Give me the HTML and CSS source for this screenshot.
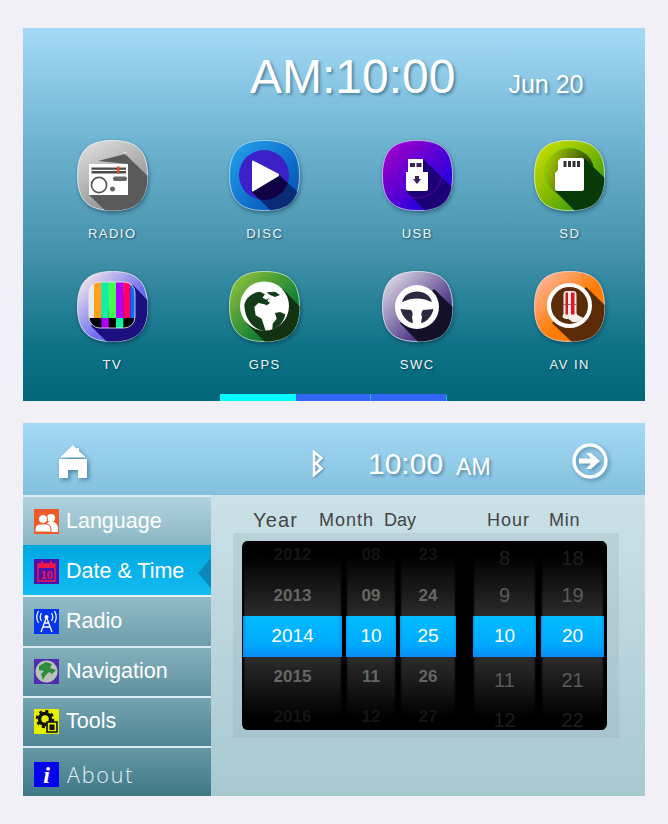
FILE: index.html
```html
<!DOCTYPE html>
<html>
  <head>
    <title>Car Head Unit</title>
    <link rel="stylesheet" href="styles.css">
  </head>
  <body>
    <svg class="defs" width="0" height="0">
      <defs>
        <path id="sq" d="M35.5 .5C60 .5 70.5 11 70.5 35.5C70.5 60 60 70.5 35.5 70.5C11 70.5 .5 60 .5 35.5C.5 11 11 .5 35.5 .5Z"/>
        <clipPath id="sqClip"><use href="#sq"/></clipPath>
        <clipPath id="discClip"><circle cx="35" cy="35" r="25"/></clipPath>
        <linearGradient id="gRadio" x1="0" y1="0" x2=".6" y2="1"><stop offset="0" stop-color="#e4e4e4"/><stop offset="1" stop-color="#8a8a8a"/></linearGradient>
        <linearGradient id="gDisc" x1="0" y1="0" x2="1" y2="1"><stop offset="0" stop-color="#25a5ee"/><stop offset="1" stop-color="#0048b0"/></linearGradient>
        <linearGradient id="gUsb" x1="0" y1="0" x2="1" y2="1"><stop offset="0" stop-color="#b000c8"/><stop offset=".7" stop-color="#3000dc"/></linearGradient>
        <linearGradient id="gSd" x1="0" y1="0" x2="1" y2="1"><stop offset="0" stop-color="#d4e400"/><stop offset=".5" stop-color="#80b800"/><stop offset="1" stop-color="#0c8c18"/></linearGradient>
        <linearGradient id="gSdIn" x1="0" y1=".3" x2="1" y2=".7"><stop offset="0" stop-color="#a8cc00"/><stop offset=".8" stop-color="#2a4400"/></linearGradient>
        <linearGradient id="gTv" x1="0" y1="0" x2="1" y2="1"><stop offset=".1" stop-color="#ece2ea"/><stop offset=".6" stop-color="#6c6cf0"/></linearGradient>
        <linearGradient id="gGps" x1="0" y1="0" x2="1" y2="1"><stop offset="0" stop-color="#9cc83c"/><stop offset=".7" stop-color="#0c7c34"/></linearGradient>
        <linearGradient id="gSwc" x1="0" y1="0" x2="1" y2="1"><stop offset=".05" stop-color="#e4e0ea"/><stop offset=".7" stop-color="#503888"/></linearGradient>
        <linearGradient id="gAv" x1="0" y1="0" x2="1" y2="1"><stop offset=".05" stop-color="#ffb8a8"/><stop offset=".55" stop-color="#ff7c00"/></linearGradient>
      </defs>
    </svg>

    <section class="screen home-screen">
      <div class="clock">
        <span class="clock-time">AM:10:00</span>
        <span class="clock-date">Jun 20</span>
      </div>

      <div class="apps">
        <div class="app">
          <svg class="app-icon" viewBox="0 0 71 71">
            <use href="#sq" fill="url(#gRadio)" stroke="#fff" stroke-width=".7"/>
            <g clip-path="url(#sqClip)"><polygon points="21,21 48,14 75,40 75,75 33,75 12,55 51,55 51,24" fill="#5a5a5a"/></g>
            <path d="M48 10.500V14.500M46 12.500H50" stroke="#ddd" stroke-width=".8"/>
            <rect x="12" y="24" width="39" height="31" fill="#fff"/>
            <rect x="14.500" y="27.500" width="34.500" height="6" fill="#4a4a4a"/>
            <rect x="14.500" y="29.800" width="34.500" height="1.200" fill="#fff"/>
            <rect x="40" y="26.500" width="2.400" height="7" fill="#f04810"/>
            <circle cx="22" cy="45" r="7.600" fill="none" stroke="#555" stroke-width="1.600"/>
            <rect x="36" y="36.500" width="14" height="4.500" rx="2" fill="#666"/>
            <circle cx="35.500" cy="49" r="2.500" fill="#666"/>
          </svg>
          <span class="app-name">RADIO</span>
        </div>
        <div class="app">
          <svg class="app-icon" viewBox="0 0 71 71">
            <use href="#sq" fill="url(#gDisc)" stroke="#cfeaff" stroke-width=".7"/>
            <g clip-path="url(#sqClip)">
              <circle cx="35" cy="35" r="25" fill="#3a20c6"/>
              <polygon points="50,35 75,58 75,75 46,75 23,52" fill="#0a2c74"/>
            </g>
            <polygon points="50,35 75,58 75,75 46,75 23,52" fill="#100044" clip-path="url(#discClip)"/>
            <path d="M24 20.500L49 33.500Q51 35 49 36.500L24 51.500Q23 52 23 50V22Q23 20 24 20.500Z" fill="#fff"/>
          </svg>
          <span class="app-name">DISC</span>
        </div>
        <div class="app">
          <svg class="app-icon" viewBox="0 0 71 71">
            <use href="#sq" fill="url(#gUsb)" stroke="#e8d0ff" stroke-width=".7"/>
            <g clip-path="url(#sqClip)"><polygon points="41,19 75,52 75,75 47,75 24,51" fill="#1c0078"/></g>
            <circle cx="35" cy="33" r="25" fill="none" stroke="#7000a8" stroke-width=".8"/>
            <path d="M26 19h15v13h5v17q0 2-2 2H26q-2 0-2-2V32h2Z" fill="#fff"/>
            <rect x="28" y="23" width="5" height="4" fill="#3a2060"/>
            <rect x="34.500" y="23" width="5" height="4" fill="#3a2060"/>
            <path d="M33 36h4v3h2l-4 5-4-5h2Z" fill="#3a2060"/>
          </svg>
          <span class="app-name">USB</span>
        </div>
        <div class="app">
          <svg class="app-icon" viewBox="0 0 71 71">
            <use href="#sq" fill="url(#gSd)" stroke="#f4ffd0" stroke-width=".7"/>
            <circle cx="36" cy="33" r="25" fill="url(#gSdIn)" stroke="#60d010" stroke-width=".8"/>
            <g clip-path="url(#sqClip)"><polygon points="50,18 75,42 75,58 55,75 45,75 21,51" fill="#0a3a08"/></g>
            <path d="M27 18h21q2 0 2 2v29q0 2-2 2H23q-2 0-2-2V33l3-3v-9Z" fill="#fff"/>
            <rect x="29.500" y="21" width="3" height="6" fill="#333"/>
            <rect x="34" y="21" width="3" height="6" fill="#333"/>
            <rect x="38.500" y="21" width="3" height="6" fill="#333"/>
            <rect x="43" y="21" width="3" height="6" fill="#333"/>
          </svg>
          <span class="app-name">SD</span>
        </div>
        <div class="app">
          <svg class="app-icon" viewBox="0 0 71 71">
            <defs><clipPath id="tvClip"><rect x="12" y="11" width="46" height="46" rx="11"/></clipPath></defs>
            <use href="#sq" fill="url(#gTv)" stroke="#fff" stroke-width=".7"/>
            <g clip-path="url(#sqClip)"><polygon points="56,14 75,34 75,75 34,75 14,55" fill="#1c1080"/></g>
            <g clip-path="url(#tvClip)">
              <rect x="12" y="11" width="5" height="36" fill="#e8e8e8"/>
              <rect x="17" y="11" width="7.400" height="36" fill="#ffa01e"/>
              <rect x="24.400" y="11" width="7.300" height="36" fill="#10f0a4"/>
              <rect x="31.700" y="11" width="7.300" height="36" fill="#40ff50"/>
              <rect x="39" y="11" width="7.300" height="36" fill="#b000ff"/>
              <rect x="46.300" y="11" width="7.300" height="36" fill="#ff0064"/>
              <rect x="53.600" y="11" width="4.400" height="36" fill="#0070ff"/>
              <rect x="12" y="47" width="46" height="10" fill="#000"/>
              <rect x="24.400" y="47" width="7.300" height="10" fill="#b000ff"/>
              <rect x="39" y="47" width="7.300" height="10" fill="#10f0a4"/>
            </g>
            <rect x="12" y="11" width="46" height="46" rx="11" fill="none" stroke="#eee" stroke-width=".8"/>
          </svg>
          <span class="app-name">TV</span>
        </div>
        <div class="app">
          <svg class="app-icon" viewBox="0 0 71 71">
            <use href="#sq" fill="url(#gGps)" stroke="#e0ffd0" stroke-width=".7"/>
            <g clip-path="url(#sqClip)"><polygon points="54,18 75,40 75,75 40,75 17,52" fill="#123212"/></g>
            <circle cx="35.500" cy="35" r="24.500" fill="#fff"/>
            <g transform="translate(-4,0) scale(.3333)" fill="#143c18">
              <path d="M58 102C62 78 85 64 105 62L120 70L112 80L125 86L135 78L120 100L100 96L88 108L92 133L110 143L115 158L122 180C85 176 60 148 58 102Z"/>
              <path d="M150 126L165 123L181 130C178 148 165 166 142 177L143 158L155 143Z"/>
              <path d="M105 93L125 103L135 96L128 90L115 93Z"/>
              <path d="M125 64L150 62L165 72L150 78L135 72Z"/>
            </g>
          </svg>
          <span class="app-name">GPS</span>
        </div>
        <div class="app">
          <svg class="app-icon" viewBox="0 0 71 71">
            <use href="#sq" fill="url(#gSwc)" stroke="#fff" stroke-width=".7"/>
            <g clip-path="url(#sqClip)"><polygon points="52,18 75,40 75,75 40,75 18,52" fill="#14102a"/></g>
            <circle cx="35" cy="36" r="22" fill="#fff"/>
            <path d="M20 31C22 24 28 20.500 35 20.500C42 20.500 48 24 50 31C44 28.500 40 27.500 35 27.500C30 27.500 26 28.500 20 31Z" fill="#2c2840"/>
            <path d="M18.500 38L29 39C31 41 31 44 30 46L31 52C25 51 20 45 18.500 38Z" fill="#2c2840"/>
            <path d="M51.500 38L41 39C39 41 39 44 40 46L39 52C45 51 50 45 51.500 38Z" fill="#2c2840"/>
          </svg>
          <span class="app-name">SWC</span>
        </div>
        <div class="app">
          <svg class="app-icon" viewBox="0 0 71 71">
            <use href="#sq" fill="url(#gAv)" stroke="#ffe8d8" stroke-width=".7"/>
            <g clip-path="url(#sqClip)"><polygon points="52,16 75,38 75,75 42,75 18,52" fill="#5c2c08"/></g>
            <circle cx="35.500" cy="34.500" r="20.500" fill="#5c2c08" stroke="#fff" stroke-width="4"/>
            <path d="M29.500 24q0-4 3-4h7q3 0 3 4v18q0 2 3 3l4 2q-4 5-11 4l-4-3q-5 0-6-2q0-2 1-3Z" fill="#f4ece8"/>
            <rect x="31.500" y="21.500" width="2.500" height="22" fill="#d01818"/>
            <rect x="37" y="21.500" width="3.500" height="22" fill="#e81020"/>
            <rect x="29.500" y="33" width="13" height=".8" fill="#a04040"/>
          </svg>
          <span class="app-name">AV IN</span>
        </div>
      </div>

      <div class="pager">
        <span class="pager-tab active"></span>
        <span class="pager-tab"></span>
        <span class="pager-tab last"></span>
      </div>
    </section>

    <section class="screen settings-screen">
      <header class="topbar">
        <svg class="home-icon" viewBox="0 0 28 35">
          <path d="M14 0L17 3H20V6L27 12.500H1Z" fill="#fff"/>
          <path d="M0 14H28V33H19V25H9V33H0Z" fill="#fff"/>
        </svg>
        <svg class="bt-icon" viewBox="0 0 11 27">
          <path d="M2 2V25L9.500 18.500L4 13.500L9.500 8Z" fill="none" stroke="#fff" stroke-width="2.600"/>
        </svg>
        <span class="bar-time">10:00</span>
        <span class="bar-ampm">AM</span>
        <svg class="next-icon" viewBox="0 0 36 36">
          <circle cx="18" cy="18" r="16" fill="none" stroke="#fff" stroke-width="3.400"/>
          <path d="M7 15.500H19L14 10H19L28 18L19 26H14L19 20.500H7Z" fill="#fff"/>
        </svg>
      </header>

      <div class="settings-body">
        <nav class="sidebar">
          <div class="side-item">
            <svg class="side-icon" viewBox="0 0 25 25">
              <rect width="25" height="25" fill="#f05a28"/>
              <circle cx="17" cy="9" r="4" fill="#fff"/>
              <path d="M12 23V18Q12 14 15 13H20Q24 15 24 19V23Z" fill="#fff"/>
              <circle cx="9" cy="10" r="4.500" fill="#fff" stroke="#f05a28"/>
              <path d="M1 23V20Q1 16 5 15H13Q17 16 17 20V23Z" fill="#fff" stroke="#f05a28"/>
            </svg>
            <span>Language</span>
          </div>
          <div class="side-item selected">
            <svg class="side-icon" viewBox="0 0 25 25">
              <rect width="25" height="25" fill="#4a12b0"/>
              <rect x="4" y="5" width="17" height="17" fill="none" stroke="#f01848" stroke-width="1.500"/>
              <rect x="4" y="5" width="17" height="4" fill="#f01848"/>
              <rect x="7" y="2" width="2" height="5" fill="#f01848"/>
              <rect x="16" y="2" width="2" height="5" fill="#f01848"/>
              <text x="12.500" y="20" class="cal-num">10</text>
            </svg>
            <span>Date &amp; Time</span>
          </div>
          <div class="side-item">
            <svg class="side-icon" viewBox="0 0 25 25">
              <rect width="25" height="25" fill="#0436ec"/>
              <circle cx="12.500" cy="8" r="2" fill="#fff"/>
              <path d="M12.500 8L7 23M12.500 8L18 23M9 18H16M10 14H15" stroke="#fff" stroke-width="1.300" fill="none"/>
              <path d="M7.500 4Q5 8 7.500 12M17.500 4Q20 8 17.500 12M4.500 2Q1 8 4.500 14M20.500 2Q24 8 20.500 14" stroke="#fff" stroke-width="1.200" fill="none"/>
            </svg>
            <span>Radio</span>
          </div>
          <div class="side-item">
            <svg class="side-icon" viewBox="0 0 25 25">
              <rect width="25" height="25" fill="#4f2cb2"/>
              <circle cx="12.500" cy="12.500" r="11" fill="#b8c4b8"/>
              <path d="M5 7L12 3L18 5L16 9L22 11L18 15L15 13L11 17L9 21L7 15L10 12L5 11Z" fill="#2f8c3c"/>
            </svg>
            <span>Navigation</span>
          </div>
          <div class="side-item">
            <svg class="side-icon" viewBox="0 0 25 25">
              <rect width="25" height="25" fill="#e4f000"/>
              <circle cx="11" cy="10" r="5.500" fill="none" stroke="#111" stroke-width="3.500"/>
              <circle cx="11" cy="10" r="8" fill="none" stroke="#111" stroke-width="2.500" stroke-dasharray="3 3.300"/>
              <rect x="13" y="13" width="10" height="10" fill="#e4f000" stroke="#111" stroke-width="1.600"/>
              <rect x="15.500" y="15.500" width="5" height="5.500" fill="#111"/>
            </svg>
            <span>Tools</span>
          </div>
          <div class="side-item about">
            <svg class="side-icon" viewBox="0 0 25 25">
              <rect width="25" height="25" fill="#0404ec"/>
              <text x="12.500" y="21" class="info-i">i</text>
            </svg>
            <span>About</span>
          </div>
        </nav>

        <main class="date-pane">
          <div class="wheel-labels">
            <span class="lbl lbl-year">Year</span>
            <span class="lbl lbl-month">Month</span>
            <span class="lbl lbl-day">Day</span>
            <span class="lbl lbl-hour">Hour</span>
            <span class="lbl lbl-min">Min</span>
          </div>
          <div class="wheel-frame">
            <div class="wheels">
              <div class="wheel w-year">
                <div class="cell far">2012</div><div class="cell near">2013</div><div class="cell cur">2014</div><div class="cell near">2015</div><div class="cell far">2016</div>
              </div>
              <div class="wheel w-month">
                <div class="cell far">08</div><div class="cell near">09</div><div class="cell cur">10</div><div class="cell near">11</div><div class="cell far">12</div>
              </div>
              <div class="wheel w-day">
                <div class="cell far">23</div><div class="cell near">24</div><div class="cell cur">25</div><div class="cell near">26</div><div class="cell far">27</div>
              </div>
              <div class="wheel w-time w-hour">
                <div class="cell far low">8</div><div class="cell near">9</div><div class="cell cur">10</div><div class="cell near low">11</div><div class="cell far low">12</div>
              </div>
              <div class="wheel w-time w-min">
                <div class="cell far low">18</div><div class="cell near">19</div><div class="cell cur">20</div><div class="cell near low">21</div><div class="cell far low">22</div>
              </div>
            </div>
          </div>
        </main>
      </div>
    </section>
  </body>
</html>
```

FILE: styles.css
```css
body {
  margin: 0;
  width: 668px;
  height: 824px;
  overflow: hidden;
  background-color: #f0f0f6;
  font-family: "Liberation Sans", Arial, sans-serif;
  color: #fff;
}

.defs {
  position: absolute;
}

.screen {
  width: 622px;
  height: 373px;
  margin-left: 23px;
}

.home-screen {
  display: flex;
  flex-direction: column;
  margin-top: 28px;
  margin-bottom: 22px;
  background: linear-gradient(#a4daf6 0%, #6fb4d2 30%, #4592ac 60%, #0f7388 85%, #006678 100%);
}

.clock {
  display: flex;
  align-items: baseline;
  gap: 53px;
  height: 56px;
  margin-top: 21px;
  margin-bottom: 35px;
  padding-left: 227px;
  text-shadow: 2px 2px 3px rgba(0, 50, 80, 0.45);
}

.clock-time {
  font-size: 48px;
  line-height: 56px;
}

.clock-date {
  font-size: 25px;
}

.apps {
  display: grid;
  grid-template-columns: repeat(4, 152.5px);
  row-gap: 29px;
  padding-left: 13px;
}

.app {
  display: flex;
  flex-direction: column;
  align-items: center;
}

.app-icon {
  display: block;
  width: 71px;
  height: 71px;
  filter: drop-shadow(1px 2px 2px rgba(0, 30, 50, 0.45));
}

.app-name {
  margin-top: 15px;
  font-size: 13px;
  line-height: 16px;
  letter-spacing: 1.5px;
  color: #f0f6f8;
  text-shadow: 1px 1px 2px rgba(0, 40, 60, 0.7);
}

.pager {
  display: flex;
  margin-top: auto;
  margin-left: 197px;
}

.pager-tab {
  width: 74px;
  height: 7px;
  background-color: #3366f4;
  border-right: 1px solid #20b8f0;
}

.pager-tab.active {
  width: 76px;
  background-color: #00ffff;
  border-right: none;
}

.pager-tab.last {
  width: 75px;
  border-top-right-radius: 2px;
}

.settings-screen {
  display: flex;
  flex-direction: column;
}

.topbar {
  display: flex;
  align-items: center;
  flex-shrink: 0;
  height: 72px;
  padding-left: 36px;
  background: linear-gradient(#a4daf6, #82c0de);
}

.home-icon {
  width: 28px;
  height: 35px;
  margin-top: 6px;
  filter: drop-shadow(2px 2px 2px rgba(0, 50, 80, 0.45));
}

.bt-icon {
  width: 11px;
  height: 27px;
  margin-top: 8px;
  margin-left: 225px;
  filter: drop-shadow(1px 1px 1px rgba(0, 50, 80, 0.4));
}

.bar-time {
  margin-top: 10px;
  margin-left: 45px;
  font-size: 30px;
  text-shadow: 2px 2px 3px rgba(0, 50, 80, 0.4);
}

.bar-ampm {
  margin-top: 16px;
  margin-left: 13px;
  font-size: 23px;
  text-shadow: 2px 2px 3px rgba(0, 50, 80, 0.4);
}

.next-icon {
  width: 36px;
  height: 36px;
  margin-top: 4px;
  margin-left: 81px;
  filter: drop-shadow(2px 2px 2px rgba(0, 50, 80, 0.4));
}

.settings-body {
  display: flex;
  flex: 1;
}

.sidebar {
  display: flex;
  flex-direction: column;
  width: 188px;
  background: linear-gradient(#a8cfdc, #44808f);
}

.side-item {
  position: relative;
  display: flex;
  align-items: center;
  gap: 7px;
  flex: 1;
  padding-left: 11px;
  border-top: 2px solid #dcebf1;
  font-size: 21.5px;
  background: linear-gradient(rgba(255, 255, 255, 0.1), rgba(0, 30, 50, 0.08));
}

.side-item.selected {
  border-top-color: #00a8e0;
  background: linear-gradient(#00a8e0, #12bbf2);
}

.side-item.selected + .side-item {
  border-top-color: #e4f2f8;
}

.side-item.selected::after {
  content: "";
  position: absolute;
  right: 0;
  top: 11px;
  border-top: 15px solid transparent;
  border-bottom: 15px solid transparent;
  border-right: 13px solid #0a88bc;
}

.side-item.about span {
  font-family: "Open Sans", sans-serif;
  font-weight: 300;
  font-size: 21.5px;
  letter-spacing: 1.8px;
  color: #e6f0f4;
  padding-left: 1px;
  padding-top: 5px;
}

.side-item.about .side-icon {
  margin-top: 5px;
}

.side-icon {
  width: 25px;
  height: 25px;
  flex-shrink: 0;
}

.cal-num {
  font-size: 11px;
  font-weight: bold;
  text-anchor: middle;
  fill: #f01848;
}

.info-i {
  font-family: "Liberation Serif", serif;
  font-size: 24px;
  font-weight: bold;
  font-style: italic;
  text-anchor: middle;
  fill: #fff;
}

.date-pane {
  flex: 1;
  padding-top: 14px;
  background: linear-gradient(#cbe1e8, #a8c8d0);
}

.wheel-labels {
  display: flex;
  height: 22px;
  margin-bottom: 2px;
  padding-left: 42px;
  color: #444;
  font-size: 18px;
  line-height: 22px;
}

.lbl-year {
  width: 66px;
  font-size: 20px;
  letter-spacing: 1.2px;
}

.lbl-month {
  width: 65px;
  letter-spacing: 1px;
}

.lbl-day {
  width: 103px;
}

.lbl-hour {
  width: 62px;
  letter-spacing: 1px;
}

.lbl-min {
  letter-spacing: 0.7px;
}

.wheel-frame {
  width: 368px;
  height: 189px;
  margin-left: 22px;
  padding: 8px 9px;
  background-color: rgba(140, 165, 175, 0.22);
}

.wheels {
  display: flex;
  width: 365px;
  height: 189px;
  padding-left: 1px;
  box-sizing: border-box;
  overflow: hidden;
  border-radius: 6px;
  background-color: #000;
}

.wheel {
  height: 202.5px;
  margin-top: -6px;
  background: linear-gradient(#000 10%, #2c2c2c 40%, #2c2c2c 60%, #000 90%);
  box-shadow: inset 2px 0 2px -1px #000, inset -2px 0 2px -1px #000;
}

.w-year {
  width: 99px;
  margin-right: 4px;
}

.w-month {
  width: 50px;
  margin-right: 4px;
}

.w-day {
  width: 56px;
  margin-right: 17px;
}

.w-hour {
  width: 63px;
  margin-right: 5px;
}

.w-min {
  width: 63px;
}

.cell {
  display: flex;
  align-items: center;
  justify-content: center;
  box-sizing: border-box;
  height: 40.5px;
  font-size: 17px;
  font-weight: bold;
}

.w-time .cell {
  font-size: 20px;
  font-weight: normal;
}

.cell.far {
  color: #141414;
}

.cell.near {
  color: #666;
}

.w-time .cell.far {
  color: #1e1e1e;
}

.w-time .cell.near {
  color: #5a5a5a;
}

.cell.low {
  padding-top: 7px;
}

.cell.cur,
.w-time .cell.cur {
  color: #fff;
  font-size: 19px;
  font-weight: normal;
  background: linear-gradient(90deg, #0a90f0 0, transparent 4%, transparent 96%, #0a90f0 100%), linear-gradient(#00bcff, #00aaff 70%, #0a8cf8);
}
```
